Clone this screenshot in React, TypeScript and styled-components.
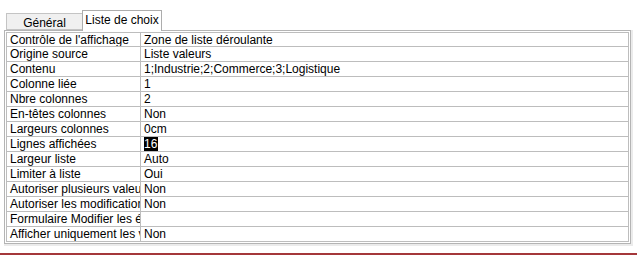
import React from "react";
import styled, { createGlobalStyle } from "styled-components";

type Prop = {
  label: string;
  value: string;
  selected?: boolean;
};

const props: Prop[] = [
  { label: "Contrôle de l'affichage", value: "Zone de liste déroulante" },
  { label: "Origine source", value: "Liste valeurs" },
  { label: "Contenu", value: "1;Industrie;2;Commerce;3;Logistique" },
  { label: "Colonne liée", value: "1" },
  { label: "Nbre colonnes", value: "2" },
  { label: "En-têtes colonnes", value: "Non" },
  { label: "Largeurs colonnes", value: "0cm" },
  { label: "Lignes affichées", value: "16", selected: true },
  { label: "Largeur liste", value: "Auto" },
  { label: "Limiter à liste", value: "Oui" },
  { label: "Autoriser plusieurs valeurs", value: "Non" },
  { label: "Autoriser les modifications de liste de valeurs", value: "Non" },
  { label: "Formulaire Modifier les éléments de liste", value: "" },
  { label: "Afficher uniquement les valeurs de la source de lignes", value: "Non" },
];

const GlobalStyle = createGlobalStyle`
  html, body {
    margin: 0;
    padding: 0;
    background: #ffffff;
  }
  body {
    font-family: "Liberation Sans", Arial, sans-serif;
    font-size: 12px;
    color: #000000;
  }
`;

const Page = styled.div`
  width: 637px;
  height: 255px;
  padding: 10px 0 0 4px;
  box-sizing: border-box;
  display: flex;
  flex-direction: column;
`;

const TabStrip = styled.div`
  display: flex;
  align-items: flex-end;
  height: 20px;
  padding-left: 2px;
  position: relative;
  z-index: 1;
`;

const Tab = styled.div<{ $active?: boolean }>`
  box-sizing: border-box;
  display: flex;
  align-items: center;
  justify-content: center;
  border: 1px solid ${(p) => (p.$active ? "#adadad" : "#c4c4c4")};
  border-bottom: ${(p) => (p.$active ? "none" : "1px solid #c4c4c4")};
  background: ${(p) => (p.$active ? "#ffffff" : "#f0f0f0")};
  height: ${(p) => (p.$active ? "21px" : "17px")};
  margin-bottom: ${(p) => (p.$active ? "-1px" : "0")};
  margin-left: ${(p) => (p.$active ? "-1px" : "0")};
  padding: ${(p) => (p.$active ? "0 0 3px" : "2px 0 0")};
  width: ${(p) => (p.$active ? "80px" : "77px")};
  white-space: nowrap;
`;

const Panel = styled.div`
  width: 627px;
  height: 214px;
  box-sizing: border-box;
  border: 1px solid #b4b4b4;
  padding: 1px;
  box-shadow: 1px 1px 0 1px #ebebeb;
`;

const Grid = styled.div`
  border: 1px solid #bdbdbd;
  display: flex;
  flex-direction: column;
`;

const Row = styled.div<{ $first?: boolean }>`
  display: grid;
  grid-template-columns: 134px 1fr;
  height: ${(p) => (p.$first ? "13px" : "15px")};
  border-top: ${(p) => (p.$first ? "none" : "1px solid #bdbdbd")};
  box-sizing: border-box;
`;

const Label = styled.div`
  border-right: 1px solid #bdbdbd;
  padding: 1px 0 0 3px;
  overflow: hidden;
  white-space: nowrap;
  line-height: 13px;
`;

const Value = styled.div`
  padding: 1px 0 0 3px;
  white-space: nowrap;
  overflow: hidden;
  line-height: 13px;
`;

const Selection = styled.span`
  background: #000000;
  color: #ffffff;
  padding: 0 1px 0 0;
`;

const Spacer = styled.div`
  flex: 1;
`;

const AccentBar = styled.div`
  height: 2px;
  margin-left: -4px;
  background: #a4373a;
`;

export default function App() {
  return (
    <>
      <GlobalStyle />
      <Page>
        <TabStrip>
          <Tab>Général</Tab>
          <Tab $active>Liste de choix</Tab>
        </TabStrip>
        <Panel>
          <Grid>
            {props.map((p, i) => (
              <Row key={p.label} $first={i === 0}>
                <Label>{p.label}</Label>
                <Value>
                  {p.selected ? <Selection>{p.value}</Selection> : p.value}
                </Value>
              </Row>
            ))}
          </Grid>
        </Panel>
        <Spacer />
        <AccentBar />
      </Page>
    </>
  );
}
